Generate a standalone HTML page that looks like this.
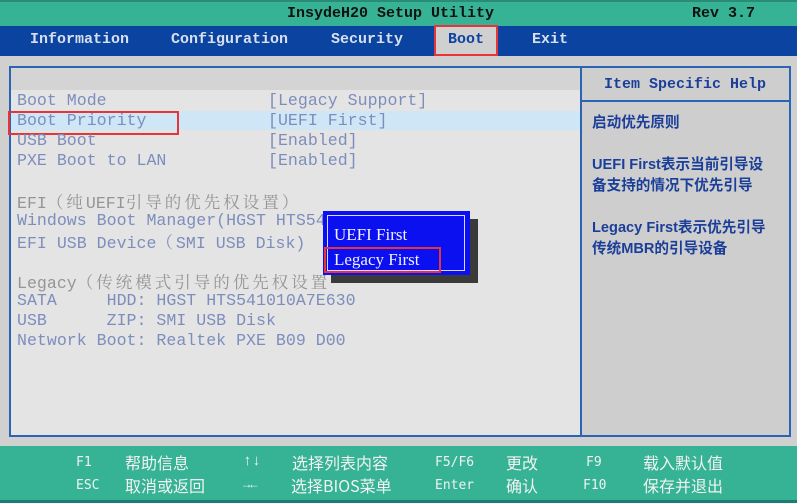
<!DOCTYPE html>
<html><head><meta charset="utf-8"><style>
*{margin:0;padding:0;box-sizing:border-box}
body{width:797px;height:503px;overflow:hidden;background:#d0d0d0;position:relative;font-family:"Liberation Mono","Noto Serif CJK SC",monospace}
.a{position:absolute;white-space:pre;line-height:20px}
.top{position:absolute;left:0;top:0;width:797px;height:26px;background:#35b394;border-top:2px solid #2a8c76}
.menu{position:absolute;left:0;top:26px;width:797px;height:30px;background:#0b44a0}
.m{position:absolute;top:31px;font-weight:bold;font-size:15px;color:#d8e0ee;line-height:18px}
.t{font-size:16.6px;color:#7d8ebd}
.g{color:#959595}
.c{font-family:"Noto Serif CJK SC",serif;font-size:16.5px;letter-spacing:3px}
.foot{position:absolute;left:0;top:446px;width:797px;height:57px;background:#35b394;border-bottom:3px solid #1f7b78}
.f{position:absolute;color:#f2f2f2;font-size:15px;line-height:20px;white-space:pre}
.fk{font-family:"DejaVu Sans Mono",monospace;font-size:13px}
.fc{font-family:"Noto Sans CJK SC",sans-serif;font-size:16px}
.h{position:absolute;left:592px;font-family:"Liberation Sans","Noto Sans CJK SC",sans-serif;font-weight:bold;font-size:14.6px;color:#1b3f98;line-height:21px;white-space:nowrap}
</style></head><body>
<div class="top"></div>
<div class="a" style="left:287px;top:5px;font-weight:bold;font-size:15px;color:#111;line-height:18px">InsydeH20 Setup Utility</div>
<div class="a" style="left:692px;top:5px;font-weight:bold;font-size:15px;color:#111;line-height:18px">Rev 3.7</div>
<div class="menu"></div>
<div style="position:absolute;left:434px;top:25px;width:64px;height:31px;background:#d0d0d0;border:2px solid #e5343a"></div>
<div class="m" style="left:30px">Information</div>
<div class="m" style="left:171px">Configuration</div>
<div class="m" style="left:331px">Security</div>
<div class="m" style="left:448px;color:#0b44a0">Boot</div>
<div class="m" style="left:532px">Exit</div>

<div style="position:absolute;left:9px;top:66px;width:782px;height:371px;border:2px solid #2c64b4;background:#e4e4e4"></div>
<div style="position:absolute;left:11px;top:68px;width:569px;height:22px;background:#d4d4d4"></div>
<div style="position:absolute;left:580px;top:68px;width:209px;height:367px;background:#cecece;border-left:2px solid #2c64b4"></div>
<div style="position:absolute;left:582px;top:100px;width:207px;height:2px;background:#2c64b4"></div>
<div style="position:absolute;left:11px;top:111px;width:569px;height:19px;background:#cfe6f7"></div>
<div style="position:absolute;left:8px;top:111px;width:171px;height:24px;border:2px solid #e5343a"></div>

<div class="a t" style="left:17px;top:91px">Boot Mode</div>
<div class="a t" style="left:17px;top:111px">Boot Priority</div>
<div class="a t" style="left:17px;top:131px">USB Boot</div>
<div class="a t" style="left:17px;top:151px">PXE Boot to LAN</div>
<div class="a t" style="left:268px;top:91px">[Legacy Support]</div>
<div class="a t" style="left:268px;top:111px">[UEFI First]</div>
<div class="a t" style="left:268px;top:131px">[Enabled]</div>
<div class="a t" style="left:268px;top:151px">[Enabled]</div>
<div class="a t g" style="left:17px;top:191px">EFI<span class="c">（纯</span>UEFI<span class="c">引导的优先权设置）</span></div>
<div class="a t" style="left:17px;top:211px">Windows Boot Manager(HGST HTS54</div>
<div class="a t" style="left:17px;top:231px">EFI USB Device<span class="c">（</span>SMI USB Disk)</div>
<div class="a t g" style="left:17px;top:271px">Legacy<span class="c">（传统模式引导的优先权设置</span></div>
<div class="a t" style="left:17px;top:291px">SATA     HDD: HGST HTS541010A7E630</div>
<div class="a t" style="left:17px;top:311px">USB      ZIP: SMI USB Disk</div>
<div class="a t" style="left:17px;top:331px">Network Boot: Realtek PXE B09 D00</div>

<div style="position:absolute;left:331px;top:219px;width:147px;height:64px;background:#3a3a3a"></div>
<div style="position:absolute;left:323px;top:211px;width:147px;height:64px;background:#0a10f0"></div>
<div style="position:absolute;left:327px;top:215px;width:138px;height:56px;border:1px solid #d8d8ff"></div>
<div style="position:absolute;left:324px;top:247px;width:117px;height:26px;border:2px solid #e5343a"></div>
<div class="a t" style="left:334px;top:225px;color:#f0f0ff;font-family:'Liberation Serif',serif;font-size:17px">UEFI First</div>
<div class="a t" style="left:334px;top:250px;color:#f0f0ff;font-family:'Liberation Serif',serif;font-size:17px">Legacy First</div>

<div class="a" style="left:604px;top:76px;font-weight:bold;font-size:15px;color:#1b3f98;line-height:18px">Item Specific Help</div>
<div class="h" style="top:113px">启动优先原则</div>
<div class="h" style="top:155px">UEFI First表示当前引导设<br>备支持的情况下优先引导</div>
<div class="h" style="top:218px">Legacy First表示优先引导<br>传统MBR的引导设备</div>

<div class="foot"></div>
<div class="f fk" style="left:76px;top:453px">F1</div>
<div class="f fc" style="left:125px;top:452px">帮助信息</div>
<div class="f" style="left:243px;top:452px">↑↓</div>
<div class="f fc" style="left:292px;top:452px">选择列表内容</div>
<div class="f fk" style="left:435px;top:453px">F5/F6</div>
<div class="f fc" style="left:506px;top:452px">更改</div>
<div class="f fk" style="left:586px;top:453px">F9</div>
<div class="f fc" style="left:643px;top:452px">载入默认值</div>
<div class="f fk" style="left:76px;top:476px">ESC</div>
<div class="f fc" style="left:125px;top:475px">取消或返回</div>
<div class="f" style="left:243px;top:475px;font-size:12px">→←</div>
<div class="f fc" style="left:291px;top:475px">选择BIOS菜单</div>
<div class="f fk" style="left:435px;top:476px">Enter</div>
<div class="f fc" style="left:506px;top:475px">确认</div>
<div class="f fk" style="left:583px;top:476px">F10</div>
<div class="f fc" style="left:643px;top:475px">保存并退出</div>
</body></html>
